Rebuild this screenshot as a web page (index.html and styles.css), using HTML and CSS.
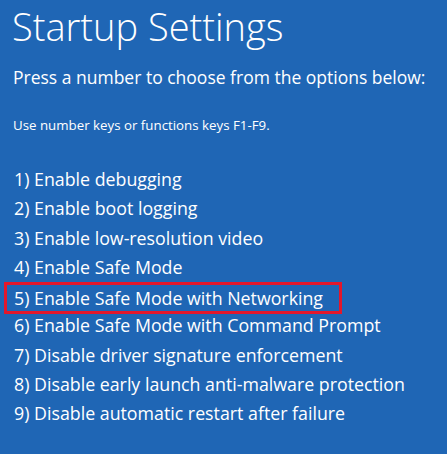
FILE: index.html
```html
<!DOCTYPE html>
<html>
<head>
<meta charset="utf-8">
<link rel="stylesheet" href="styles.css">
</head>
<body>
<main class="screen">
  <h1 class="title">Startup Settings</h1>
  <p class="lead">Press a number to choose from the options below:</p>
  <p class="hint">Use number keys or functions keys F1-F9.</p>
  <ol class="options">
    <li>1) Enable debugging</li>
    <li>2) Enable boot logging</li>
    <li>3) Enable low-resolution video</li>
    <li>4) Enable Safe Mode</li>
    <li class="selected">5) Enable Safe Mode with Networking</li>
    <li>6) Enable Safe Mode with Command Prompt</li>
    <li>7) Disable driver signature enforcement</li>
    <li>8) Disable early launch anti-malware protection</li>
    <li>9) Disable automatic restart after failure</li>
  </ol>
</main>
</body>
</html>
```
FILE: styles.css
```css
html, body {
  margin: 0;
  padding: 0;
  background: #1f66b5;
}
.screen {
  width: 447px;
  height: 454px;
  box-sizing: border-box;
  padding: 0 0 0 13px;
  color: #ffffff;
  font-family: "Open Sans", "Noto Sans", "DejaVu Sans", sans-serif;
  overflow: hidden;
}
.title {
  margin: 0 0 0 -1px;
  font-size: 38px;
  font-weight: 300;
  line-height: 52px;
}
.lead {
  margin: 13px 0 0 0;
  font-size: 17.5px;
  line-height: 24px;
  white-space: nowrap;
}
.hint {
  margin: 27px 0 0 0;
  font-size: 13.3px;
  line-height: 18px;
}
.options {
  list-style: none;
  margin: 31px 0 0 0;
  padding: 0;
}
.options li {
  font-size: 17.8px;
  line-height: 29.25px;
  height: 29.25px;
  white-space: nowrap;
  margin-left: 1px;
}
.options li.selected {
  margin-left: -9px;
  padding-left: 7px;
  width: 325px;
  border: 3px solid #e3172b;
  line-height: 26px;
  height: 26px;
  margin-bottom: -2.75px;
}
```
